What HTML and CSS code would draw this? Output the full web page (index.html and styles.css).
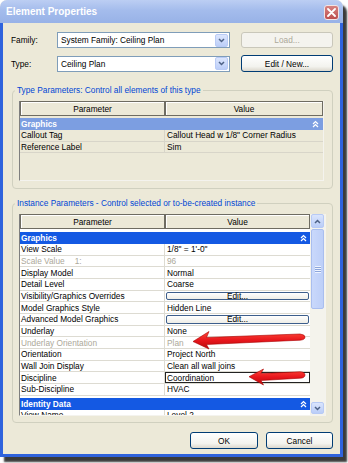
FILE: index.html
```html
<!DOCTYPE html>
<html>
<head>
<meta charset="utf-8">
<title>Element Properties</title>
<link rel="stylesheet" href="styles.css">
</head>
<body>
<div class="window">
  <div class="titlebar">
    <span class="title">Element Properties</span>
    <span class="close"><svg width="9" height="9" viewBox="0 0 9 9"><path d="M1 1 L8 8 M8 1 L1 8" stroke="#fff" stroke-width="1.8" stroke-linecap="round"/></svg></span>
  </div>
  <div class="client">
    <div class="field-row r1">
      <span class="lbl">Family:</span>
      <div class="combo"><span class="combo-text">System Family: Ceiling Plan</span><span class="drop"><svg width="7" height="5" viewBox="0 0 7 5"><path d="M1 1 L3.5 3.5 L6 1" fill="none" stroke="#4D6185" stroke-width="1.5"/></svg></span></div>
      <div class="btn disabled">Load...</div>
    </div>
    <div class="field-row r2">
      <span class="lbl">Type:</span>
      <div class="combo"><span class="combo-text">Ceiling Plan</span><span class="drop"><svg width="7" height="5" viewBox="0 0 7 5"><path d="M1 1 L3.5 3.5 L6 1" fill="none" stroke="#4D6185" stroke-width="1.5"/></svg></span></div>
      <div class="btn">Edit / New...</div>
    </div>

    <fieldset class="group type-group">
      <legend>Type Parameters: Control all elements of this type</legend>
      <div class="tgrid">
        <div class="hdr"><div class="hc c1">Parameter</div><div class="hc c2">Value</div></div>
        <div class="band band-light">Graphics<svg class="chev" width="7" height="8" viewBox="0 0 7 8"><path d="M1 4 L3.5 1.5 L6 4 M1 7 L3.5 4.5 L6 7" fill="none" stroke="#fff" stroke-width="1.2"/></svg></div>
        <div class="row"><div class="cell c1">Callout Tag</div><div class="cell c2">Callout Head w 1/8" Corner Radius</div></div>
        <div class="row"><div class="cell c1">Reference Label</div><div class="cell c2">Sim</div></div>
      </div>
    </fieldset>

    <fieldset class="group inst-group">
      <legend>Instance Parameters - Control selected or to-be-created instance</legend>
      <div class="iwrap">
        <div class="igrid">
          <div class="hdr"><div class="hc c1">Parameter</div><div class="hc c2">Value</div></div>
          <div class="band band-dark first">Graphics<svg class="chev" width="7" height="8" viewBox="0 0 7 8"><path d="M1 4 L3.5 1.5 L6 4 M1 7 L3.5 4.5 L6 7" fill="none" stroke="#fff" stroke-width="1.2"/></svg></div>
          <div class="row"><div class="cell c1">View Scale</div><div class="cell c2">1/8" = 1'-0"</div></div>
          <div class="row dim"><div class="cell c1">Scale Value<span class="scale-num">1:</span></div><div class="cell c2">96</div></div>
          <div class="row"><div class="cell c1">Display Model</div><div class="cell c2">Normal</div></div>
          <div class="row"><div class="cell c1">Detail Level</div><div class="cell c2">Coarse</div></div>
          <div class="row"><div class="cell c1">Visibility/Graphics Overrides</div><div class="cell c2 has-btn"><span class="edit">Edit...</span></div></div>
          <div class="row"><div class="cell c1">Model Graphics Style</div><div class="cell c2">Hidden Line</div></div>
          <div class="row"><div class="cell c1">Advanced Model Graphics</div><div class="cell c2 has-btn"><span class="edit">Edit...</span></div></div>
          <div class="row"><div class="cell c1">Underlay</div><div class="cell c2">None</div></div>
          <div class="row dim"><div class="cell c1">Underlay Orientation</div><div class="cell c2">Plan</div></div>
          <div class="row"><div class="cell c1">Orientation</div><div class="cell c2">Project North</div></div>
          <div class="row"><div class="cell c1">Wall Join Display</div><div class="cell c2">Clean all wall joins</div></div>
          <div class="row"><div class="cell c1">Discipline</div><div class="cell c2 boxed">Coordination</div></div>
          <div class="row"><div class="cell c1">Sub-Discipline</div><div class="cell c2">HVAC</div></div>
          <div class="band band-dark">Identity Data<svg class="chev" width="7" height="8" viewBox="0 0 7 8"><path d="M1 4 L3.5 1.5 L6 4 M1 7 L3.5 4.5 L6 7" fill="none" stroke="#fff" stroke-width="1.2"/></svg></div>
          <div class="row"><div class="cell c1">View Name</div><div class="cell c2">Level 2</div></div>
        </div>
        <div class="vscroll">
          <div class="sb-btn"><svg width="7" height="5" viewBox="0 0 7 5"><path d="M1 4 L3.5 1.5 L6 4" fill="none" stroke="#4D6185" stroke-width="1.5"/></svg></div>
          <div class="thumb"><span class="grip"></span></div>
          <div class="track"></div>
          <div class="sb-btn down"><svg width="7" height="5" viewBox="0 0 7 5"><path d="M1 1 L3.5 3.5 L6 1" fill="none" stroke="#4D6185" stroke-width="1.5"/></svg></div>
        </div>
      </div>
    </fieldset>

    <div class="actions">
      <div class="btn ok">OK</div>
      <div class="btn cancel">Cancel</div>
    </div>
  </div>
</div>
<svg class="arrows" width="348" height="463" viewBox="0 0 348 463">
  <defs>
    <linearGradient id="rg" x1="0" y1="0" x2="0" y2="1">
      <stop offset="0" stop-color="#FF4A3A"/>
      <stop offset="0.5" stop-color="#E8161C"/>
      <stop offset="1" stop-color="#B80A0A"/>
    </linearGradient>
  </defs>
  <path d="M193,341.5 L209,331.5 L206.5,337.5 L300,334 Q305,334.5 305,337 Q305,339.8 300,340.2 L206.5,344.5 L209,349 Z" fill="url(#rg)" stroke="#A80000" stroke-width="0.6"/>
  <path d="M249,376.7 L263.5,369 L261,373.5 L300,371.8 Q305,372 305,375 Q305,378 300,378.2 L261,380.5 L263.5,385 Z" fill="url(#rg)" stroke="#A80000" stroke-width="0.6"/>
</svg>
</body>
</html>
```
FILE: styles.css
```css
* { box-sizing: border-box; }
html, body { margin: 0; padding: 0; }
body {
  width: 348px;
  height: 463px;
  background: #fff;
  position: relative;
  overflow: hidden;
  font-family: "Liberation Sans", Arial, sans-serif;
  font-size: 8.3px;
  color: #000;
}

.window {
  width: 343px;
  height: 457px;
  display: flex;
  flex-direction: column;
  border-radius: 7px 7px 0 0;
  box-shadow: 4px 5px 2px rgba(25, 25, 25, 0.85);
  background: #ECE9D8;
}

.titlebar {
  height: 23px;
  flex: none;
  display: flex;
  align-items: center;
  justify-content: space-between;
  padding: 0 4px 0 6px;
  background: linear-gradient(#BCCEF3, #A4BCEC 45%, #98B2E7);
  border-radius: 7px 7px 0 0;
}
.title {
  color: #fff;
  font-weight: bold;
  font-size: 10px;
}
.close {
  width: 15px;
  height: 15px;
  margin-top: 2px;
  border: 1px solid #F2E4E4;
  border-radius: 3px;
  background: linear-gradient(#D68280, #BD4F50);
  display: flex;
  align-items: center;
  justify-content: center;
}

.client {
  flex: 1;
  display: flex;
  flex-direction: column;
  border: 3px solid #2F63DD;
  border-top: 0;
  padding: 0 7px 0 8px;
}

.field-row {
  display: flex;
  align-items: center;
  flex: none;
}
.r1 { margin-top: 9px; height: 16px; }
.r2 { margin-top: 7px; height: 17px; }
.lbl { width: 46px; }

.combo {
  width: 173px;
  height: 16px;
  border: 1px solid #7F9DB9;
  background: #fff;
  display: flex;
  align-items: center;
  justify-content: space-between;
  padding: 0 1px 0 3px;
}
.drop {
  width: 13px;
  height: 13px;
  border: 1px solid #B9CBF6;
  border-radius: 2px;
  background: linear-gradient(#DCE6FD, #BCCEF8);
  display: flex;
  align-items: center;
  justify-content: center;
}

.btn {
  width: 92px;
  height: 16px;
  margin-left: 11px;
  border: 1px solid #003C74;
  border-radius: 3px;
  background: linear-gradient(#FFFFFF, #F3F3EE 70%, #DCD8CD);
  display: flex;
  align-items: center;
  justify-content: center;
}
.r2 .btn { height: 17px; }
.btn.disabled {
  border-color: #C9C7BA;
  background: #F4F3EE;
  color: #ACA899;
}

.group {
  margin: 13px 0 0 1px;
  width: 321px;
  min-width: 0;
  border: 1px solid #D0D0BF;
  border-radius: 4px;
  padding: 6px 6px 7px 6px;
  flex: none;
}
.group legend {
  color: #0046D5;
  padding: 0 2px;
  margin-left: -4px;
  line-height: 10px;
  font-size: 8.3px;
}
.inst-group { margin-top: 9px; padding-bottom: 6px; }

.tgrid {
  width: 305px;
  height: 80px;
  border-left: 1px solid #7F7F7F;
  border-bottom: 1px solid #F4F3EE;
  border-right: 1px solid #F4F3EE;
  background: #ECE9D8;
}

.hdr {
  display: flex;
  height: 15px;
}
.hc {
  display: flex;
  align-items: center;
  justify-content: center;
  border: 1px solid #6E6C62;
  background: #ECE9D8;
  box-shadow: inset 1px 1px #fff;
}
.hc.c1 { width: 145px; }
.hc.c2 { flex: 1; }

.band {
  height: 12px;
  margin-top: 2px;
  display: flex;
  align-items: center;
  justify-content: space-between;
  padding: 0 4px 0 1px;
  font-weight: bold;
  color: #fff;
}
.band-light { background: #7C9EE1; }
.band-dark { background: #1459E3; padding-right: 3px; }
.band-dark.first { margin-top: 3px; }

.row {
  display: flex;
  height: 11.67px;
  border-bottom: 1px solid #D8D5C9;
}
.tgrid .row { height: 11.5px; }
.cell {
  display: flex;
  align-items: center;
  white-space: nowrap;
  overflow: hidden;
}
.cell.c1 {
  width: 145px;
  padding-left: 1px;
  border-right: 1px solid #D8D5C9;
}
.cell.c2 {
  flex: 1;
  padding-left: 2px;
}
.dim { color: #ACA899; }
.scale-num { margin-left: 10px; }

.iwrap {
  width: 307px;
  height: 202px;
  display: flex;
  border-left: 1px solid #7F7F7F;
  border-bottom: 1px solid #F4F3EE;
  border-right: 1px solid #F4F3EE;
  background: #fff;
}
.igrid {
  width: 291px;
  height: 201px;
  overflow: hidden;
  background: #fff;
}
.igrid .row { border-bottom-color: #DDDBD2; }
.igrid .cell.c1 { border-right-color: #DDDBD2; }

.has-btn { padding: 1px 1px 1px 1px; }
.cell.c2.has-btn { padding-left: 1px; }
.edit {
  flex: 1;
  height: 100%;
  border: 1px solid #3D5E8C;
  border-radius: 2px;
  background: linear-gradient(#FFFFFF, #EEEDE7);
  display: flex;
  align-items: center;
  justify-content: center;
}
.cell.c2.boxed { border: 1px solid #222; padding-left: 1px; }

.vscroll {
  width: 15px;
  display: flex;
  flex-direction: column;
  background: #F4F3EC;
  padding: 0 1px 1px 1px;
}
.sb-btn {
  height: 14px;
  flex: none;
  border: 1px solid #B7CAF5;
  border-radius: 2px;
  background: linear-gradient(#DAE5FD, #BACDF7);
  display: flex;
  align-items: center;
  justify-content: center;
}
.sb-btn.down { height: 12px; }
.thumb {
  height: 80px;
  flex: none;
  margin-top: 1px;
  border: 1px solid #A9BEEF;
  border-radius: 2px;
  background: linear-gradient(90deg, #C9D8FB, #BDCFF8);
  display: flex;
  align-items: center;
  justify-content: center;
}
.grip {
  width: 6px;
  height: 7px;
  background: repeating-linear-gradient(#EEF3FE 0 1px, #8CA5DB 1px 2px);
}
.track { flex: 1; }

.actions {
  margin-top: 9px;
  display: flex;
  justify-content: flex-end;
  gap: 8px;
  flex: none;
}
.actions .btn {
  margin-left: 0;
  height: 17px;
}
.btn.ok { width: 68px; }
.btn.cancel { width: 67px; }

.arrows {
  position: absolute;
  left: 0;
  top: 0;
  pointer-events: none;
}
```
